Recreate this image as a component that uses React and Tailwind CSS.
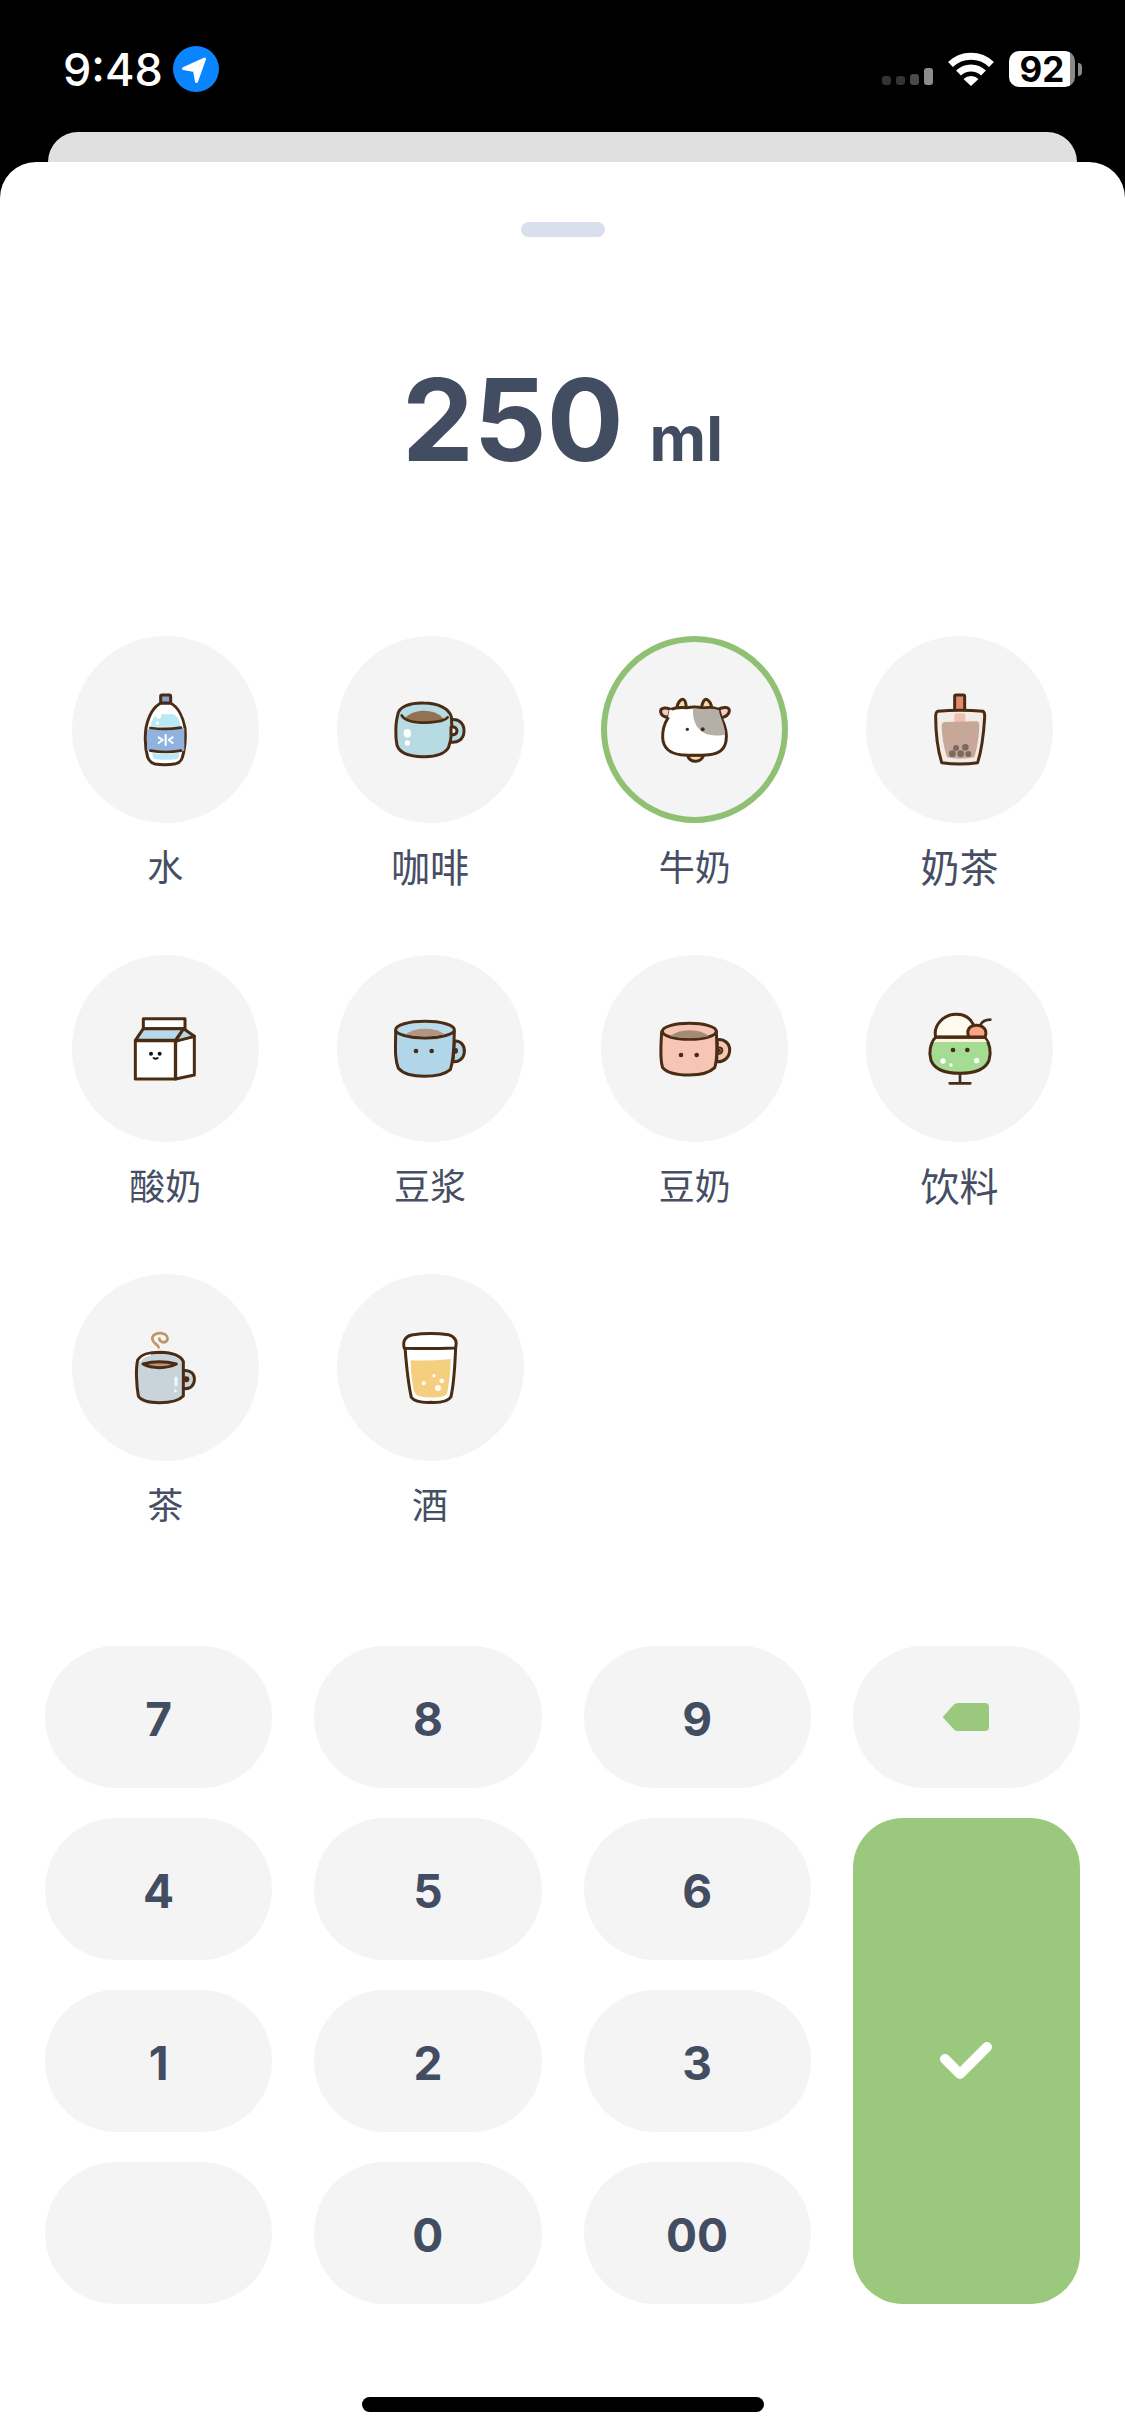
import { useState } from "react";
import clsx from "clsx";

const INK = "#4a2c14";

// Shared frame for the drink drawings
const Drawing = ({ viewBox, children }) => (
  <svg
    viewBox={viewBox}
    className="w-[80px] h-[80px]"
    fill="none"
    stroke={INK}
    strokeWidth="9"
    strokeLinecap="round"
    strokeLinejoin="round"
    aria-hidden="true"
  >
    {children}
  </svg>
);

const WaterIcon = () => (
  <Drawing viewBox="196 208 240 240">
    <path fill="#fff" d="M304 247C282 258 266 288 259 322C255 352 258 388 264 410Q270 426 286 430Q318 435 348 429Q364 425 368 410C376 384 378 350 376 322C370 288 354 258 332 247Z" />
    <g stroke="none">
      <path fill="#b9e8f6" d="M273 318C275 298 284 284 298 281L340 281C353 286 361 300 363 318Z" />
      <path fill="#8fb2df" d="M262 324Q318 330 374 322L374 390Q318 396 262 390Z" />
      <path fill="#b9e8f6" d="M278 397Q318 403 358 396Q360 416 346 416Q318 419 290 416Q278 416 278 397Z" />
      <circle cx="297" cy="286" r="8" fill="#fff" />
      <circle cx="293" cy="307" r="5" fill="#fff" />
    </g>
    <rect x="303" y="223" width="30" height="24" rx="4" fill="#7ea4d6" />
    <path strokeWidth="8" d="M272 322Q318 328 364 321M272 390Q318 398 364 390" />
    <path stroke="#fff" strokeWidth="6" d="M297 350L309 358L297 367M318 343V373M339 350L327 358L339 367" />
  </Drawing>
);

const CoffeeIcon = () => (
  <Drawing viewBox="991 208 240 240">
    <path fill="#b7dbe3" d="M1172 298C1192 292 1214 304 1213 332C1212 356 1194 368 1170 364Z" />
    <path fill="#b7dbe3" d="M1014 284C1016 256 1054 246 1092 247C1136 247 1168 264 1175 288C1178 320 1176 356 1166 382C1152 402 1122 409 1090 408C1052 408 1020 398 1012 374C1006 344 1008 304 1014 284Z" />
    <path stroke="none" fill="#937254" d="M1036 292C1050 276 1072 270 1094 270C1120 271 1140 278 1152 296Q1092 316 1036 292Z" />
    <path strokeWidth="8" d="M1026 284C1036 302 1064 306 1098 306C1130 305 1156 302 1164 290" />
    <path fill="#f4f4f4" d="M1174 320Q1192 316 1192 332Q1190 344 1174 342Z" />
    <ellipse cx="1043" cy="338" rx="11" ry="13" fill="#fff" stroke="none" />
    <circle cx="1043" cy="367" r="8" fill="#fff" stroke="none" />
  </Drawing>
);

const MilkIcon = () => (
  <Drawing viewBox="195 208 240 240">
    <path fill="#f6dca8" d="M260 264C262 246 272 234 280 236C288 238 288 252 289 264ZM334 264C336 248 342 234 350 236C360 240 364 252 366 264Z" />
    <path fill="#f6dca8" d="M292 403Q298 422 317 422Q334 421 342 403Z" />
    <path fill="#f3cfc6" d="M242 266C226 260 210 260 212 274C214 288 228 290 238 290ZM384 266C400 258 420 258 418 272C416 286 402 290 392 292Z" />
    <path fill="#fff" d="M242 266Q262 258 290 261Q316 256 340 262Q366 258 386 266C390 276 390 284 395 294C404 312 412 340 408 362C404 382 390 400 358 402Q316 406 272 402C238 398 220 380 218 352C217 326 226 304 234 292Q240 280 242 266Z" />
    {/* ears run into the face, so cover the seam */}
    <path stroke="#fff" d="M242 272L239 287" />
    <path fill="#b5afa7" stroke="none" d="M309 264L340 266Q366 262 387 269C388 284 396 296 400 312Q405 326 405 342C370 348 344 344 328 326C312 308 308 288 309 264Z" />
    <circle cx="292" cy="326" r="5" fill={INK} stroke="none" />
    <circle cx="338" cy="326" r="6" fill={INK} stroke="none" />
  </Drawing>
);

const MilkTeaIcon = () => (
  <Drawing viewBox="989 208 240 240">
    <rect x="1093" y="223" width="30" height="52" rx="4" fill="#e28a6b" />
    <path fill="#f3ebe5" d="M1042 272Q1110 265 1178 272Q1184 276 1183 290C1180 340 1174 388 1162 426Q1108 434 1054 426C1042 386 1036 340 1036 288Q1036 274 1042 272Z" />
    <g stroke="none">
      <rect x="1092" y="278" width="33" height="30" rx="6" fill="#f0bfb4" />
      <path fill="#c7a797" d="M1062 304L1160 302Q1167 304 1167 314C1166 350 1160 384 1152 410Q1108 418 1070 410C1060 380 1054 344 1054 314Q1055 305 1062 304Z" />
      <g fill="#7a6a60">
        <circle cx="1097" cy="382" r="9" />
        <circle cx="1125" cy="380" r="10" />
        <circle cx="1086" cy="399" r="10" />
        <circle cx="1111" cy="399" r="10" />
        <circle cx="1134" cy="400" r="9" />
      </g>
    </g>
  </Drawing>
);

const YogurtIcon = () => (
  <Drawing viewBox="196 204 240 240">
    <path fill="#fff" d="M251 233H376V263H251Z" />
    <path fill="#fff" d="M348 298L404 286V402L348 414Z" />
    <path fill="#b9d9ea" d="M251 263H372L347 298H227ZM372 263L404 286L347 301Z" />
    <path fill="#fff" d="M227 299H347V414H227Z" />
    <g fill="#111" stroke="none">
      <circle cx="274" cy="338" r="6" />
      <circle cx="300" cy="338" r="6" />
    </g>
    <path stroke="#111" strokeWidth="6" d="M282 351Q288 355 294 351" />
  </Drawing>
);

const SoyMilkIcon = () => (
  <Drawing viewBox="991 204 240 240">
    <path fill="#b1d6ea" d="M1184 300C1204 298 1216 314 1214 334C1212 352 1198 364 1180 362Z" />
    <path fill="#b1d6ea" d="M1008 270C1008 320 1004 350 1016 382C1032 400 1064 406 1094 406C1128 406 1156 400 1172 386C1184 350 1182 320 1184 270Z" />
    <ellipse cx="1096" cy="266" rx="88" ry="25" fill="#b9dced" />
    <path stroke="none" fill="#b4937f" d="M1036 280Q1060 263 1096 263Q1134 263 1156 280Q1096 292 1036 280Z" />
    <circle cx="1186" cy="329" r="9" fill={INK} stroke="none" />
    <circle cx="1069" cy="330" r="7" fill={INK} stroke="none" />
    <circle cx="1116" cy="330" r="7" fill={INK} stroke="none" />
  </Drawing>
);

const SoyDrinkIcon = () => (
  <Drawing viewBox="195 204 240 240">
    <path fill="#f7c5b4" d="M382 296C402 292 420 308 419 328C418 350 402 364 380 362Z" />
    <path fill="#f7c5b4" d="M215 272C214 300 208 352 218 380C234 398 266 402 298 402C332 402 358 396 374 380C384 352 380 300 379 272Z" />
    <ellipse cx="298" cy="271" rx="81" ry="24" fill="#f7c5b4" />
    <path stroke="none" fill="#a58a74" d="M240 286Q262 268 298 268Q336 268 358 286Q298 298 240 286Z" />
    <path strokeWidth="6" d="M384 320Q398 318 397 329Q395 340 384 338" />
    <circle cx="387" cy="329" r="6" fill={INK} stroke="none" />
    <circle cx="273" cy="342" r="7" fill={INK} stroke="none" />
    <circle cx="320" cy="342" r="7" fill={INK} stroke="none" />
  </Drawing>
);

const SodaIcon = () => (
  <Drawing viewBox="989 204 240 240">
    <path fill="#fffbee" d="M1036 288C1028 252 1060 220 1098 220C1130 220 1154 238 1158 288Z" />
    <path fill="#a3dc92" d="M1036 289H1184C1198 306 1204 334 1196 358C1184 388 1152 397 1108 397C1064 397 1034 388 1022 358C1014 334 1020 306 1036 289Z" />
    <path fill="#fff5dc" stroke="none" d="M1038 293H1182L1190 303H1030Z" />
    <path fill="#fba385" d="M1136 288C1126 268 1138 253 1158 253C1182 253 1192 270 1184 288Z" />
    <path strokeWidth="8" d="M1036 289H1184M1170 252Q1178 236 1200 236M1109 398V426M1078 427H1140" />
    <circle cx="1088" cy="327" r="7" fill={INK} stroke="none" />
    <circle cx="1131" cy="327" r="7" fill={INK} stroke="none" />
    <g fill="#fff" stroke="none">
      <circle cx="1058" cy="360" r="8" />
      <circle cx="1082" cy="372" r="5" />
      <circle cx="1159" cy="359" r="8" />
    </g>
  </Drawing>
);

const TeaIcon = () => (
  <Drawing viewBox="196 200 240 240">
    <path stroke="#bf9468" strokeWidth="8" d="M297 258C294 248 276 244 278 230C280 216 298 214 308 216C322 218 326 230 322 238C316 246 300 244 299 232" />
    <path fill="#c8d4d9" d="M370 328C392 324 406 338 404 358C402 376 388 384 368 382Z" />
    <path fill="#c8d4d9" d="M234 296C246 278 272 273 302 273C334 274 362 282 371 300L371 404C356 420 326 424 300 424C272 424 244 418 236 404C230 370 228 320 234 296Z" />
    <path stroke="#fff" strokeWidth="5" d="M242 298Q250 284 272 281" />
    <path fill="#bb937a" d="M250 308Q298 294 350 308Q328 319 300 319Q270 319 250 308Z" />
    <circle cx="380" cy="354" r="9" fill={INK} stroke="none" />
    <path stroke="#eefafa" strokeWidth="9" d="M349 350V370M347 388V388" />
  </Drawing>
);

const BeerIcon = () => (
  <Drawing viewBox="991 200 240 240">
    <path fill="#fff" d="M1036 258H1188C1186 310 1184 360 1174 406C1166 420 1140 424 1114 423C1090 424 1064 420 1055 408C1044 360 1040 310 1036 258Z" />
    <path fill="#fff" d="M1034 261C1028 240 1036 226 1056 221Q1110 213 1166 220C1186 226 1194 240 1187 260Q1110 263 1034 261Z" />
    <path stroke="none" fill="#f4cf80" d="M1053 297Q1112 299 1173 293C1172 336 1168 370 1162 396Q1156 408 1130 408Q1100 410 1080 405Q1064 402 1061 380C1055 350 1054 324 1053 297Z" />
    <g fill="#fffdf2" stroke="none">
      <circle cx="1123" cy="343" r="5" />
      <circle cx="1146" cy="359" r="7" />
      <circle cx="1092" cy="366" r="6" />
      <circle cx="1135" cy="380" r="9" />
    </g>
  </Drawing>
);

// Drinks shown in the picker, in display order
const DRINKS = [
  { name: "水", Icon: WaterIcon },
  { name: "咖啡", Icon: CoffeeIcon, wide: true },
  { name: "牛奶", Icon: MilkIcon },
  { name: "奶茶", Icon: MilkTeaIcon, wide: true },
  { name: "酸奶", Icon: YogurtIcon },
  { name: "豆浆", Icon: SoyMilkIcon },
  { name: "豆奶", Icon: SoyDrinkIcon },
  { name: "饮料", Icon: SodaIcon, wide: true },
  { name: "茶", Icon: TeaIcon },
  { name: "酒", Icon: BeerIcon },
];

const StatusBar = () => (
  <header className="flex h-[132px] items-start justify-between pl-[63px] pr-[43px] pt-[42px] text-white">
    <div className="flex h-[54px] items-center gap-[10px]">
      <span className="text-[45px] font-medium leading-none">9:48</span>
      <svg viewBox="0 0 46 46" className="w-[46px] h-[46px]" aria-hidden="true">
        <circle cx="23" cy="23" r="23" fill="#0b84ff" />
        <path d="M10.500 22.500L31.500 13L23.500 35.500L21.500 24.500Z" fill="#fff" stroke="#fff" strokeWidth="3" strokeLinejoin="round" />
      </svg>
    </div>
    <div className="flex h-[54px] items-center">
      <svg viewBox="0 0 51 34" className="w-[51px] h-[34px]" aria-hidden="true">
        <rect x="0" y="24" width="9" height="9" rx="3" fill="#333" />
        <rect x="14" y="24" width="9" height="9" rx="3" fill="#333" />
        <rect x="28" y="22" width="9" height="11" rx="3" fill="#4a4a4a" />
        <rect x="42" y="16" width="9" height="17" rx="3" fill="#8c8c8c" />
      </svg>
      <svg viewBox="0 0 46 34" className="ml-[15px] w-[46px] h-[34px]" aria-hidden="true">
        <g fill="none" stroke="#fff" strokeWidth="7">
          <path d="M2.500 12.500A29.500 29.500 0 0 1 43.500 12.500" />
          <path d="M10.500 21A18 18 0 0 1 35.500 21" />
        </g>
        <path d="M15.500 27A11 11 0 0 1 30.500 27L23 34Z" fill="#fff" />
      </svg>
      <div className="ml-[15px] flex h-[36px] w-[66px] items-center justify-center rounded-[10px] bg-[linear-gradient(to_right,#fff_61px,#8a8a8a_61px)]">
        <span className="text-[35px] font-bold leading-none text-black">92</span>
      </div>
      <div className="ml-[3px] h-[13px] w-[4px] rounded-r-full bg-[#8a8a8a]" />
    </div>
  </header>
);

const DrinkButton = ({ drink, selected, onSelect }) => (
  <button type="button" aria-pressed={selected} onClick={onSelect} className="flex flex-col items-center gap-[17px]">
    <span
      className={clsx(
        "flex h-[187px] w-[187px] items-center justify-center rounded-full bg-[#f4f4f4]",
        selected && "border-[6px] border-[#8fc073]"
      )}
    >
      <drink.Icon />
    </span>
    <span
      className={clsx(
        "font-['Noto_Sans_CJK_SC',sans-serif] leading-[50px] text-[#454e63]",
        drink.wide ? "text-[39px]" : "text-[36px]"
      )}
    >
      {drink.name}
    </span>
  </button>
);

const Key = ({ label, onPress }) => (
  <button
    type="button"
    aria-label={label || "空"}
    onClick={onPress}
    className="h-[142px] rounded-full bg-[#f4f4f4] pt-[3px] text-[46px] font-bold leading-none"
  >
    {label}
  </button>
);

export default function App() {
  const [amount, setAmount] = useState("250");
  const [selected, setSelected] = useState("牛奶");

  const press = (digits) => {
    setAmount((prev) => (prev === "0" ? digits : prev + digits).slice(0, 4));
  };

  const keys = (labels) => labels.map((label) => (
    <Key key={label} label={label} onPress={() => press(label)} />
  ));

  return (
    <div className="min-h-screen bg-black font-['Inter','Noto_Sans_CJK_SC',sans-serif]">
      <StatusBar />
      <div className="mx-[48px] h-[30px] rounded-t-[30px] bg-[#e0e0e0]" />
      <main className="flex flex-col rounded-t-[36px] bg-white pt-[60px] pb-[24px] text-[#434d61]">
        <div className="mx-auto h-[15px] w-[84px] rounded-full bg-[#dadfee]" />

        {/* Amount */}
        <h1 className="mt-[113px] mb-[146px] flex items-baseline justify-center gap-[26px] text-[114px] font-bold leading-[140px]">
          {amount}
          <span className="text-[62px] leading-none">ml</span>
        </h1>

        {/* Drink picker */}
        <div className="grid grid-cols-4 gap-y-[65px] px-[33px]">
          {DRINKS.map((drink) => (
            <DrinkButton
              key={drink.name}
              drink={drink}
              selected={drink.name === selected}
              onSelect={() => setSelected(drink.name)}
            />
          ))}
        </div>

        {/* Keypad */}
        <div className="mt-[118px] grid grid-cols-4 gap-x-[42px] gap-y-[30px] px-[45px]">
          {keys(["7", "8", "9"])}
          <button
            type="button"
            aria-label="删除"
            onClick={() => setAmount((prev) => prev.slice(0, -1) || "0")}
            className="flex h-[142px] items-center justify-center rounded-full bg-[#f4f4f4]"
          >
            <svg viewBox="0 0 46 28" className="w-[46px] h-[28px]" aria-hidden="true">
              <path d="M0.500 13L11 1.500Q12.500 0 15 0H42Q46 0 46 4V24Q46 28 42 28H15Q12.500 28 11 26.500L0.500 15Q-0.500 14 0.500 13Z" fill="#9ac97d" />
            </svg>
          </button>
          {keys(["4", "5", "6"])}
          <button
            type="button"
            aria-label="确定"
            className="row-span-3 flex items-center justify-center rounded-[50px] bg-[#9ac97d]"
          >
            <svg viewBox="0 0 52 38" className="w-[52px] h-[38px]" aria-hidden="true">
              <path d="M5 17L20 32L47 5" fill="none" stroke="#fff" strokeWidth="10" strokeLinecap="round" strokeLinejoin="round" />
            </svg>
          </button>
          {keys(["1", "2", "3"])}
          <Key label="" />
          {keys(["0", "00"])}
        </div>

        {/* Home indicator */}
        <div className="mx-auto mt-[93px] h-[15px] w-[402px] rounded-full bg-black" />
      </main>
    </div>
  );
}
